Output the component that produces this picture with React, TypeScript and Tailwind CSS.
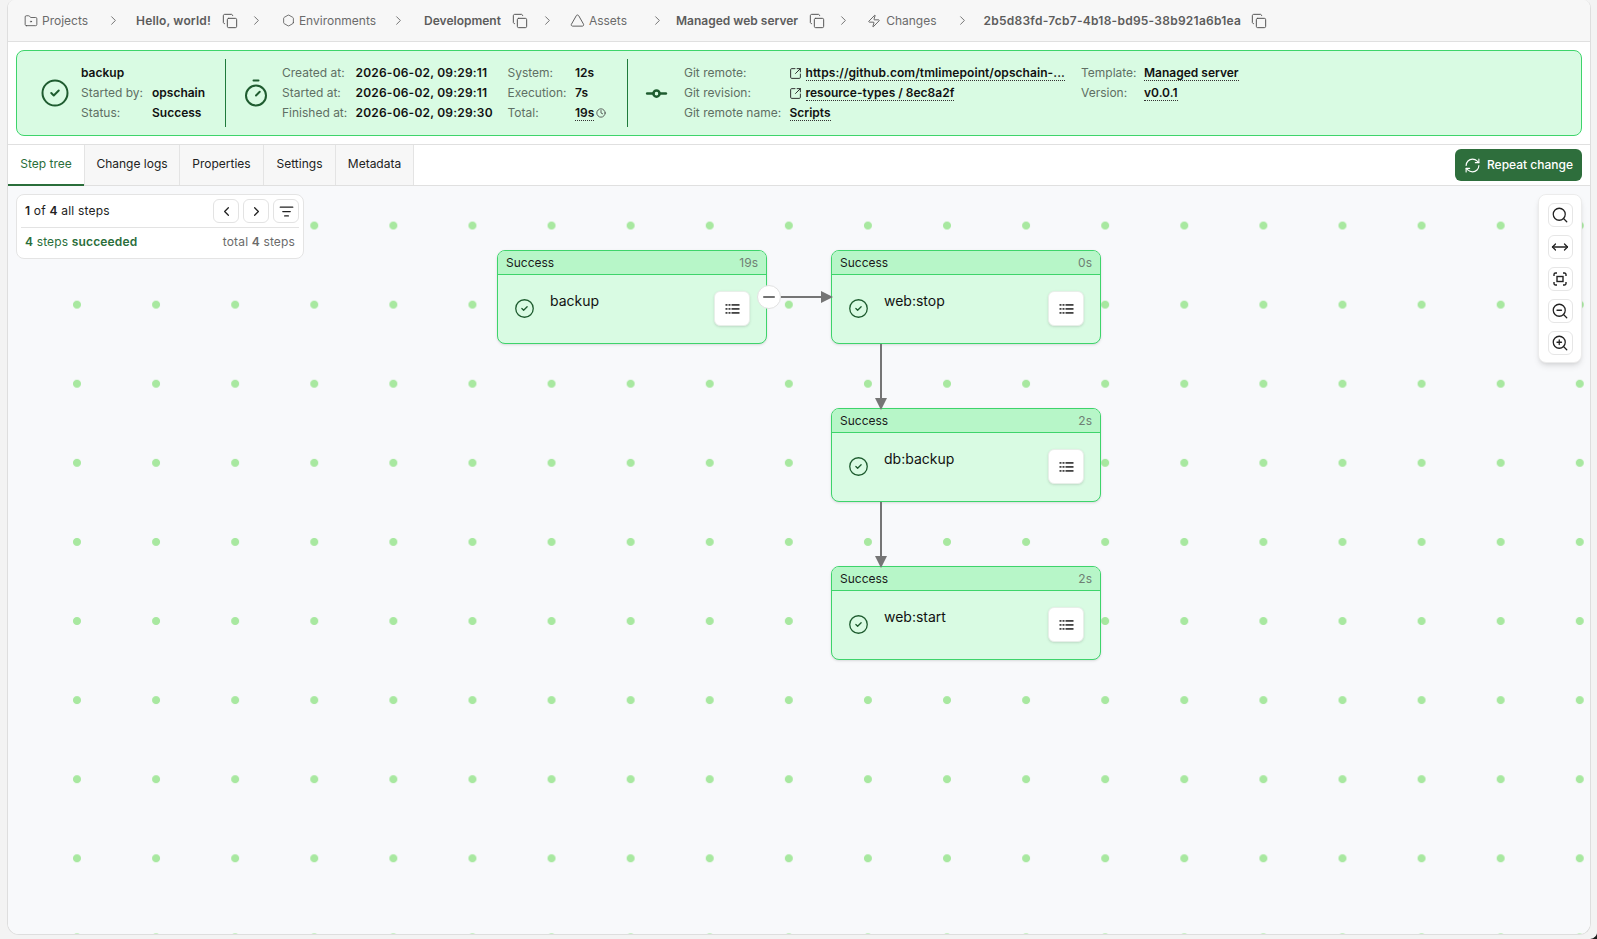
import React from "react";
import {
  FolderDot, Copy, ChevronRight, ChevronLeft, Hexagon, Triangle, Zap, CircleCheck, Timer,
  GitCommitHorizontal, SquareArrowOutUpRight, Clock, RefreshCw, Search, MoveHorizontal,
  ZoomIn, ZoomOut, ListFilter, Minus,
} from "lucide-react";

const Sep = ({ className }: { className: string }) => (
  <ChevronRight size={15} strokeWidth={1.5} className={"shrink-0 text-[#6b6b6b] " + className} />
);
const CopyI = ({ className }: { className: string }) => (
  <Copy size={16} strokeWidth={1.5} className={"shrink-0 text-[#555] " + className} />
);
const Crumb = ({ children, className = "" }: { children: React.ReactNode; className?: string }) => (
  <span className={"text-[#6b6b6b] whitespace-nowrap " + className}>{children}</span>
);
const Bold = ({ children, className = "" }: { children: React.ReactNode; className?: string }) => (
  <span className={"font-semibold text-[#5c5c5c] whitespace-nowrap " + className}>{children}</span>
);

const L = ({ children }: { children: React.ReactNode }) => <div className="text-[#5f6f64] whitespace-nowrap">{children}</div>;
const V = ({ children, className = "" }: { children: React.ReactNode; className?: string }) => (
  <div className={"font-semibold text-[#111] whitespace-nowrap " + className}>{children}</div>
);
const U = ({ children, className = "" }: { children: React.ReactNode; className?: string }) => (
  <span className={"font-semibold text-[#111] whitespace-nowrap border-b border-dotted border-[#333] leading-[15px] inline-block " + className}>{children}</span>
);

const RowsIcon = () => (
  <svg width="15" height="12" viewBox="0 0 15 12" fill="#444">
    {[1, 5, 9].map((y) => (
      <g key={y}>
        <rect x="0.500" y={y} width="2" height="1.800" />
        <rect x="3.500" y={y} width="2" height="1.800" />
        <rect x="6.500" y={y} width="8" height="1.800" />
      </g>
    ))}
  </svg>
);

function Node({ pos, dur, name }: { pos: string; dur: string; name: string }) {
  return (
    <div className={"absolute w-[270px] h-[94px] rounded-lg border border-[#3ed46b] bg-[#d9fbe3] shadow-sm flex flex-col overflow-hidden " + pos}>
      <div className="h-[24px] shrink-0 bg-[#b7f6c8] border-b border-[#3ed46b] px-2 flex items-center justify-between text-[12px]">
        <span className="text-[#1a1a1a]">Success</span>
        <span className="text-[#6f7f74]">{dur}</span>
      </div>
      <div className="flex-1 flex items-start pl-[16px] pr-[16px] relative">
        <CircleCheck size={21} strokeWidth={1.5} className="text-[#1f5c30] mt-[23px] shrink-0" />
        <span className="ml-[15px] mt-[16px] text-[14px] leading-[20px] text-[#111]">{name}</span>
        <button className="ml-auto mt-[16px] w-[36px] h-[35px] rounded-md bg-white border border-[#e8efe9] shadow-sm flex items-center justify-center">
          <RowsIcon />
        </button>
      </div>
    </div>
  );
}

const ToolBtn = ({ children }: { children: React.ReactNode }) => (
  <button className="w-[25px] h-[24px] rounded-md bg-white border border-[#e6e6e6] flex items-center justify-center text-[#222]">{children}</button>
);

const NavBtn = ({ children }: { children: React.ReactNode }) => (
  <button className="w-[26px] h-[24px] rounded-md bg-white border border-[#e3e3e3] flex items-center justify-center text-[#222]">{children}</button>
);

export default function App() {
  return (
    <div className="relative h-[939px] w-full bg-[#f3f3f3] pl-[7px] pr-[6px] pb-[4px] overflow-hidden font-['Inter',sans-serif] text-[12px] leading-[20px]">
      <div className="h-full flex flex-col bg-white border border-t-0 border-[#dedede] rounded-b-xl rounded-t-lg overflow-hidden">
        {/* breadcrumb */}
        <div className="h-[42px] shrink-0 bg-[#f7f7f7] border-b border-[#e0e0e0] flex items-center pl-[16px]">
          <FolderDot size={14} strokeWidth={1.5} className="text-[#555] shrink-0" />
          <Crumb className="ml-[4px]">Projects</Crumb>
          <Sep className="ml-[18px]" />
          <Bold className="ml-[15px] tracking-[0.15px]">Hello, world!</Bold>
          <CopyI className="ml-[11px]" />
          <Sep className="ml-[11px]" />
          <Hexagon size={13} strokeWidth={1.5} className="ml-[18px] text-[#555] shrink-0" />
          <Crumb className="ml-[4px]">Environments</Crumb>
          <Sep className="ml-[15px]" />
          <Bold className="ml-[18px]">Development</Bold>
          <CopyI className="ml-[11px]" />
          <Sep className="ml-[12px]" />
          <Triangle size={15} strokeWidth={1.5} className="ml-[15px] text-[#555] shrink-0" />
          <Crumb className="ml-[4px]">Assets</Crumb>
          <Sep className="ml-[23px]" />
          <Bold className="ml-[11px]">Managed web server</Bold>
          <CopyI className="ml-[11px]" />
          <Sep className="ml-[11px]" />
          <Zap size={14} strokeWidth={1.5} className="ml-[16px] text-[#555] shrink-0" />
          <Crumb className="ml-[5px]">Changes</Crumb>
          <Sep className="ml-[18px]" />
          <Bold className="ml-[14px] tracking-[0.25px]">2b5d83fd-7cb7-4b18-bd95-38b921a6b1ea</Bold>
          <CopyI className="ml-[10px]" />
        </div>

        {/* summary */}
        <div className="shrink-0 p-[8px] border-b border-[#e0e0e0]">
          <div className="h-[86px] rounded-lg border border-[#3ed46b] bg-[#d9fbe3] flex items-center py-[8px]">
            <div className="w-[209px] h-full flex items-center border-r border-[#1f7a3c] pl-[23px]">
              <CircleCheck size={30} strokeWidth={1.6} className="text-[#1f5c30] shrink-0" />
              <div className="ml-[11px] grid grid-cols-[71px_auto]">
                <div className="col-span-2 font-semibold text-[#111]">backup</div>
                <L>Started by:</L><V>opschain</V>
                <L>Status:</L><V>Success</V>
              </div>
            </div>
            <div className="w-[402px] h-full flex items-center border-r border-[#1f7a3c] pl-[15px]">
              <Timer size={30} strokeWidth={1.6} className="text-[#1f5c30] shrink-0" />
              <div className="ml-[11px] grid grid-cols-[73.500px_152px_67.500px_auto]">
                <L>Created at:</L><V className="tracking-[0.2px]">2026-06-02, 09:29:11</V><L>System:</L><V>12s</V>
                <L>Started at:</L><V className="tracking-[0.2px]">2026-06-02, 09:29:11</V><L>Execution:</L><V>7s</V>
                <L>Finished at:</L><V className="tracking-[0.2px]">2026-06-02, 09:29:30</V><L>Total:</L>
                <div className="flex items-center"><U>19s</U><Clock size={10} className="ml-[2px] text-[#444]" /></div>
              </div>
            </div>
            <div className="flex-1 h-full flex items-center pl-[16px]">
              <GitCommitHorizontal size={25} strokeWidth={2.4} className="text-[#1f5c30] shrink-0" />
              <div className="ml-[15px] grid grid-cols-[104.500px_292.500px]">
                <L>Git remote:</L>
                <div className="flex items-center"><SquareArrowOutUpRight size={13} strokeWidth={1.7} className="text-[#222] mr-[4px]" /><U className="tracking-[0.07px]">https://github.com/tmlimepoint/opschain-...</U></div>
                <L>Git revision:</L>
                <div className="flex items-center"><SquareArrowOutUpRight size={13} strokeWidth={1.7} className="text-[#222] mr-[4px]" /><U>resource-types / 8ec8a2f</U></div>
                <L>Git remote name:</L>
                <div className="pl-[1px]"><U>Scripts</U></div>
              </div>
              <div className="self-start mt-[4px] grid grid-cols-[63px_auto]">
                <L>Template:</L><div><U>Managed server</U></div>
                <L>Version:</L><div><U>v0.0.1</U></div>
              </div>
            </div>
          </div>
        </div>

        {/* tabs */}
        <div className="h-[41px] shrink-0 flex border-b border-[#e0e0e0] bg-white">
          <div className="w-[76px] -mb-px pb-[2px] border-b-2 border-[#2a6e3a] flex items-center justify-center text-[#2a6e3a]">Step tree</div>
          <div className="w-[95px] flex items-center justify-center pb-[2px] bg-[#f7f7f7] border-l border-[#e4e4e4] text-[#222]">Change logs</div>
          <div className="w-[84px] flex items-center justify-center pb-[2px] bg-[#f7f7f7] border-l border-[#e4e4e4] text-[#222]">Properties</div>
          <div className="w-[72px] flex items-center justify-center pb-[2px] bg-[#f7f7f7] border-l border-[#e4e4e4] text-[#222]">Settings</div>
          <div className="w-[79px] flex items-center justify-center pb-[2px] bg-[#f7f7f7] border-x border-[#e4e4e4] text-[#222]">Metadata</div>
          <div className="flex-1 flex items-start justify-end pr-[8px] pt-[4px]">
            <button className="h-[32px] w-[127px] rounded-md bg-[#2e6e3c] text-white flex items-center justify-center font-medium">
              <RefreshCw size={17} strokeWidth={1.6} className="mr-[6px]" />Repeat change
            </button>
          </div>
        </div>

        {/* canvas */}
        <div className="relative flex-1 overflow-hidden bg-[#f8f9fb] bg-[radial-gradient(circle,#a8e8a0_3.6px,transparent_4.4px)] bg-size-[79.1px_79.1px] bg-position-[29.45px_0px]">
          <div className="absolute left-[8px] top-[8px] w-[288px] h-[65px] rounded-lg bg-white border border-[#e4e4e4] px-[4px]">
            <div className="h-[33px] border-b border-[#e3e3e3] flex items-center pl-[4px]">
              <span className="text-[#222] tracking-[0.2px]"><b className="font-semibold">1</b> of <b className="font-semibold">4</b> all steps</span>
              <div className="ml-auto flex gap-[4px]">
                <NavBtn><ChevronLeft size={15} strokeWidth={2} /></NavBtn>
                <NavBtn><ChevronRight size={15} strokeWidth={2} /></NavBtn>
                <NavBtn><ListFilter size={15} strokeWidth={2} /></NavBtn>
              </div>
            </div>
            <div className="h-[28px] flex items-center justify-between px-[4px] tracking-[0.15px]">
              <span className="text-[#2a6e3a]"><b className="font-semibold">4</b> steps <b className="font-semibold">succeeded</b></span>
              <span className="text-[#6b6b6b]">total <b className="font-semibold">4</b> steps</span>
            </div>
          </div>

          <div className="absolute left-[1530px] top-[8px] w-[44px] h-[169px] rounded-lg bg-white border border-[#ececec] shadow-md flex flex-col items-center gap-[8px] pt-[8px]">
            <ToolBtn><Search size={18} strokeWidth={1.7} /></ToolBtn>
            <ToolBtn><MoveHorizontal size={18} strokeWidth={1.7} /></ToolBtn>
            <ToolBtn>
              <svg width="16" height="16" viewBox="0 0 16 16" fill="none" stroke="currentColor" strokeWidth="1.4">
                <path d="M2 5V3.500A1.500 1.500 0 0 1 3.500 2H5M11 2h1.500A1.500 1.500 0 0 1 14 3.500V5M14 11v1.500a1.500 1.500 0 0 1-1.500 1.500H11M5 14H3.500A1.500 1.500 0 0 1 2 12.500V11" />
                <rect x="5" y="5.500" width="6" height="5" />
              </svg>
            </ToolBtn>
            <ToolBtn><ZoomOut size={18} strokeWidth={1.7} /></ToolBtn>
            <ToolBtn><ZoomIn size={18} strokeWidth={1.7} /></ToolBtn>
          </div>

          <Node pos="left-[489px] top-[64px]" dur="19s" name="backup" />
          <Node pos="left-[823px] top-[64px]" dur="0s" name="web:stop" />
          <Node pos="left-[823px] top-[222px]" dur="2s" name="db:backup" />
          <Node pos="left-[823px] top-[380px]" dur="2s" name="web:start" />

          {/* edges */}
          <svg className="absolute left-[760px] top-[100px]" width="80" height="22" viewBox="0 0 80 22">
            <path d="M10 11H56" stroke="#757575" strokeWidth="2" />
            <path d="M53 5L65 11L53 17Z" fill="#757575" />
          </svg>
          <svg className="absolute left-[865px] top-[158px]" width="16" height="68" viewBox="0 0 16 68">
            <path d="M8 0V56" stroke="#757575" strokeWidth="2" />
            <path d="M2 54H14L8 66Z" fill="#757575" />
          </svg>
          <svg className="absolute left-[865px] top-[316px]" width="16" height="68" viewBox="0 0 16 68">
            <path d="M8 0V56" stroke="#757575" strokeWidth="2" />
            <path d="M2 54H14L8 66Z" fill="#757575" />
          </svg>
          <button className="absolute left-[749px] top-[99px] w-[24px] h-[24px] rounded-full bg-white border border-[#e2e2e2] flex items-center justify-center text-[#444]">
            <Minus size={18} strokeWidth={2} />
          </button>
        </div>
      </div>
      <svg className="absolute right-0 bottom-0" width="7" height="8" viewBox="0 0 7 8">
        <path d="M7 0V8H0A7 7 0 0 0 7 0Z" fill="#1a1a1a" />
      </svg>
    </div>
  );
}
